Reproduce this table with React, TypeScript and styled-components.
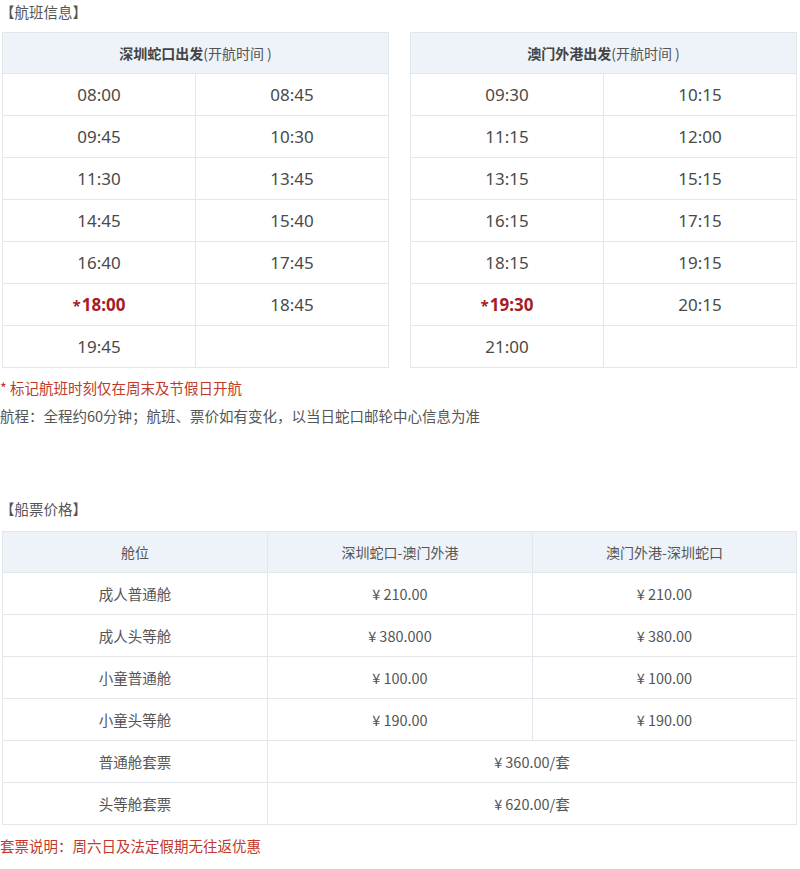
import React from "react";
import styled, { createGlobalStyle } from "styled-components";

const Global = createGlobalStyle`
  body {
    margin: 0;
    background: #ffffff;
    font-family: "Noto Sans CJK SC", "Noto Sans", sans-serif;
    color: #555;
  }
`;

const Page = styled.div`
  width: 800px;
  display: flex;
  flex-direction: column;
`;

const SectionTitle = styled.div<{ $top?: number }>`
  font-size: 14.5px;
  line-height: 24px;
  color: #555;
  margin-top: ${(p) => p.$top ?? 0}px;
  height: 24px;
`;

const ScheduleRow = styled.div`
  display: flex;
  gap: 21px;
  margin-top: 8px;
  padding-left: 2px;
`;

const Grid = styled.div<{ $cols: string; $width: number }>`
  display: grid;
  grid-template-columns: ${(p) => p.$cols};
  width: ${(p) => p.$width}px;
  border-top: 1px solid #e3e6ea;
  border-left: 1px solid #e3e6ea;
  box-sizing: border-box;
`;

const HeadCell = styled.div<{ $span?: number }>`
  grid-column: span ${(p) => p.$span ?? 1};
  height: 41px;
  box-sizing: border-box;
  background: #eef3fa;
  border-right: 1px solid #e3e6ea;
  border-bottom: 1px solid #e3e6ea;
  display: flex;
  align-items: center;
  justify-content: center;
  font-size: 14px;
  color: #555;
`;

const Strong = styled.b`
  font-weight: 700;
  color: #444;
`;

const TimeCell = styled.div<{ $special?: boolean }>`
  height: 42px;
  box-sizing: border-box;
  border-right: 1px solid #e3e6ea;
  border-bottom: 1px solid #e3e6ea;
  display: flex;
  align-items: center;
  justify-content: center;
  font-family: "Noto Sans", "Noto Sans CJK SC", sans-serif;
  font-size: 17px;
  color: ${(p) => (p.$special ? "#a81c24" : "#4a4a4a")};
  font-weight: ${(p) => (p.$special ? 700 : 400)};
`;

const Star = styled.span`
  font-size: 15px;
  margin-right: 1px;
`;

const PriceCell = styled.div<{ $span?: number }>`
  grid-column: span ${(p) => p.$span ?? 1};
  height: 42px;
  box-sizing: border-box;
  border-right: 1px solid #e3e6ea;
  border-bottom: 1px solid #e3e6ea;
  display: flex;
  align-items: center;
  justify-content: center;
  font-size: 14.5px;
  color: #555;
`;

const Yen = styled.span`
  margin-right: 3px;
`;

const Note = styled.div<{ $red?: boolean; $top?: number }>`
  font-size: 14.5px;
  line-height: 28px;
  height: 28px;
  color: ${(p) => (p.$red ? "#c0392b" : "#555")};
  margin-top: ${(p) => p.$top ?? 0}px;
`;

const PriceWrap = styled.div`
  padding-left: 2px;
  margin-top: 10px;
`;

type Slot = { t: string; s?: boolean } | null;

const left: Slot[] = [
  { t: "08:00" }, { t: "08:45" },
  { t: "09:45" }, { t: "10:30" },
  { t: "11:30" }, { t: "13:45" },
  { t: "14:45" }, { t: "15:40" },
  { t: "16:40" }, { t: "17:45" },
  { t: "18:00", s: true }, { t: "18:45" },
  { t: "19:45" }, null,
];

const right: Slot[] = [
  { t: "09:30" }, { t: "10:15" },
  { t: "11:15" }, { t: "12:00" },
  { t: "13:15" }, { t: "15:15" },
  { t: "16:15" }, { t: "17:15" },
  { t: "18:15" }, { t: "19:15" },
  { t: "19:30", s: true }, { t: "20:15" },
  { t: "21:00" }, null,
];

const Schedule = ({ from, slots }: { from: string; slots: Slot[] }) => (
  <Grid $cols="193px 193px" $width={387}>
    <HeadCell $span={2}>
      <Strong>{from}</Strong>(开航时间 )
    </HeadCell>
    {slots.map((s, i) => (
      <TimeCell key={i} $special={s?.s}>
        {s?.s && <Star>*</Star>}
        {s ? s.t : ""}
      </TimeCell>
    ))}
  </Grid>
);

const prices: [string, string, string][] = [
  ["成人普通舱", "210.00", "210.00"],
  ["成人头等舱", "380.000", "380.00"],
  ["小童普通舱", "100.00", "100.00"],
  ["小童头等舱", "190.00", "190.00"],
];

const packages: [string, string][] = [
  ["普通舱套票", "360.00/套"],
  ["头等舱套票", "620.00/套"],
];

export default function App() {
  return (
    <Page>
      <Global />
      <SectionTitle>【航班信息】</SectionTitle>
      <ScheduleRow>
        <Schedule from="深圳蛇口出发" slots={left} />
        <Schedule from="澳门外港出发" slots={right} />
      </ScheduleRow>
      <Note $red $top={6}>* 标记航班时刻仅在周末及节假日开航</Note>
      <Note>航程：全程约60分钟；航班、票价如有变化，以当日蛇口邮轮中心信息为准</Note>
      <SectionTitle $top={67}>【船票价格】</SectionTitle>
      <PriceWrap>
        <Grid $cols="265px 265px 264px" $width={795}>
          <HeadCell>舱位</HeadCell>
          <HeadCell>深圳蛇口-澳门外港</HeadCell>
          <HeadCell>澳门外港-深圳蛇口</HeadCell>
          {prices.map(([k, a, b]) => (
            <React.Fragment key={k}>
              <PriceCell>{k}</PriceCell>
              <PriceCell><Yen>¥</Yen>{a}</PriceCell>
              <PriceCell><Yen>¥</Yen>{b}</PriceCell>
            </React.Fragment>
          ))}
          {packages.map(([k, v]) => (
            <React.Fragment key={k}>
              <PriceCell>{k}</PriceCell>
              <PriceCell $span={2}><Yen>¥</Yen>{v}</PriceCell>
            </React.Fragment>
          ))}
        </Grid>
      </PriceWrap>
      <Note $red $top={7}>套票说明：周六日及法定假期无往返优惠</Note>
    </Page>
  );
}
